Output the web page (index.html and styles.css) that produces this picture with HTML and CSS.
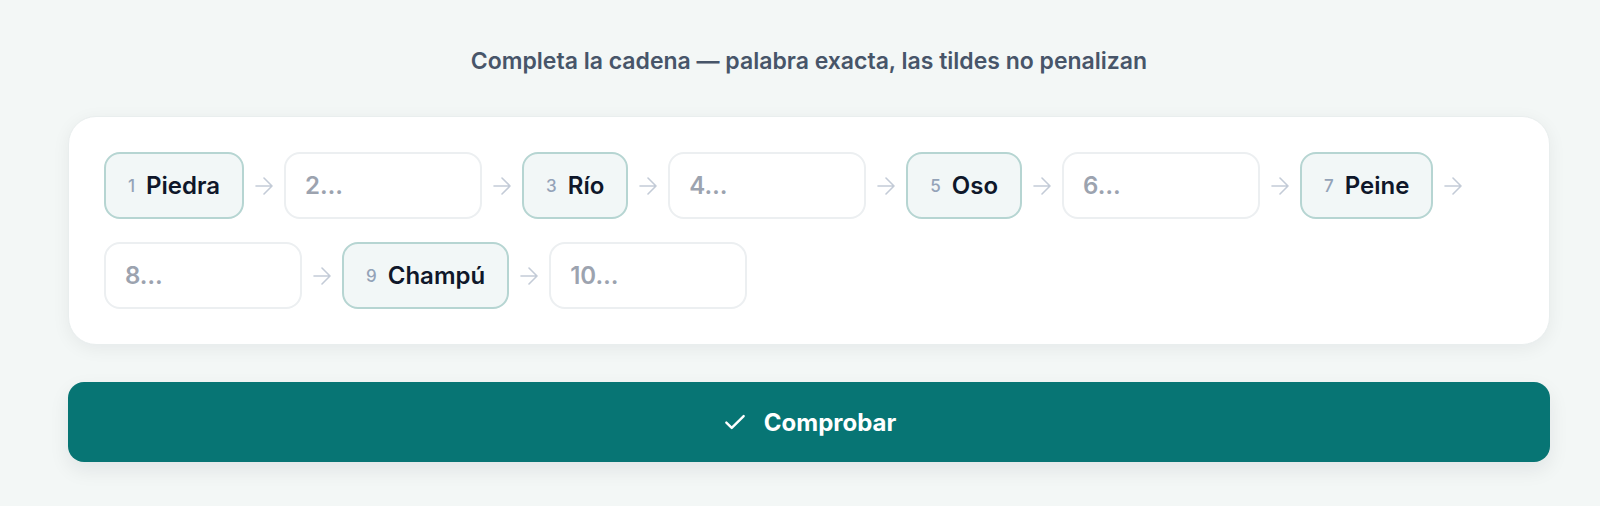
FILE: index.html
```html
<!DOCTYPE html>
<html lang="es">
<head>
  <meta charset="UTF-8" />
  <meta name="viewport" content="width=device-width, initial-scale=1.0"/>
  <title>Cadena de palabras</title>
  <link rel="stylesheet" href="styles.css">
</head>
<body>

  <div class="page">
    <p class="hint">Completa la cadena — palabra exacta, las tildes no penalizan</p>

    <div class="card">
      <div class="chain">
        <div class="link"><div class="chip"><span class="num">1</span><span class="word">Piedra</span></div><svg class="arrow" viewBox="0 0 18 18"><path d="M1 9h16M9 1l8 8-8 8"/></svg></div>
        <div class="link"><input class="slot" type="text" placeholder="2…"><svg class="arrow" viewBox="0 0 18 18"><path d="M1 9h16M9 1l8 8-8 8"/></svg></div>
        <div class="link"><div class="chip"><span class="num">3</span><span class="word">Río</span></div><svg class="arrow" viewBox="0 0 18 18"><path d="M1 9h16M9 1l8 8-8 8"/></svg></div>
        <div class="link"><input class="slot" type="text" placeholder="4…"><svg class="arrow" viewBox="0 0 18 18"><path d="M1 9h16M9 1l8 8-8 8"/></svg></div>
        <div class="link"><div class="chip"><span class="num">5</span><span class="word">Oso</span></div><svg class="arrow" viewBox="0 0 18 18"><path d="M1 9h16M9 1l8 8-8 8"/></svg></div>
        <div class="link"><input class="slot" type="text" placeholder="6…"><svg class="arrow" viewBox="0 0 18 18"><path d="M1 9h16M9 1l8 8-8 8"/></svg></div>
        <div class="link"><div class="chip"><span class="num">7</span><span class="word">Peine</span></div><svg class="arrow" viewBox="0 0 18 18"><path d="M1 9h16M9 1l8 8-8 8"/></svg></div>
        <div class="link"><input class="slot" type="text" placeholder="8…"><svg class="arrow" viewBox="0 0 18 18"><path d="M1 9h16M9 1l8 8-8 8"/></svg></div>
        <div class="link"><div class="chip"><span class="num">9</span><span class="word">Champú</span></div><svg class="arrow" viewBox="0 0 18 18"><path d="M1 9h16M9 1l8 8-8 8"/></svg></div>
        <div class="link"><input class="slot" type="text" placeholder="10…"></div>
      </div>
    </div>

    <button class="check">
      <svg viewBox="0 0 24 24"><path d="M4 12.5l5 5L20 6.5"/></svg>
      Comprobar
    </button>
  </div>

</body>
</html>
```

FILE: styles.css
```css
body {
  margin: 0;
  font-family: Inter, "Noto Sans", sans-serif;
  background: #f3f7f6;
  color: #0f172a;
}
.page {
  padding: 45px 50px 40px 68px;
}
.hint {
  margin: 0 0 39px;
  text-align: center;
  font-size: 23px;
  line-height: 32px;
  font-weight: 600;
  color: #475569;
}
.card {
  background: #fff;
  border: 1px solid #e9eeee;
  border-radius: 28px;
  padding: 35px;
  box-shadow: 0 4px 18px rgba(15, 23, 42, 0.06);
}
.chain {
  display: flex;
  flex-wrap: wrap;
  column-gap: 11px;
  row-gap: 23px;
}
.link {
  display: flex;
  align-items: center;
  gap: 11px;
}
.chip {
  box-sizing: border-box;
  height: 67px;
  display: flex;
  align-items: center;
  gap: 11px;
  padding: 0 22px;
  background: #f2f7f7;
  border: 2px solid #b6d5d2;
  border-radius: 16px;
}
.num {
  font-size: 17px;
  font-weight: 500;
  color: #94a3b8;
}
.word {
  font-size: 24px;
  font-weight: 600;
  color: #0f172a;
}
.slot {
  box-sizing: border-box;
  width: 198px;
  height: 67px;
  padding: 0 19px;
  border: 2px solid #eceff1;
  border-radius: 16px;
  background: #fff;
  font-family: inherit;
  font-size: 24px;
  font-weight: 600;
  color: #0f172a;
  outline: none;
}
.slot::placeholder {
  color: #9ca3af;
}
.arrow {
  width: 18px;
  height: 18px;
  fill: none;
  stroke: #c3cbd7;
  stroke-width: 1.6;
  stroke-linecap: round;
  stroke-linejoin: round;
}
.check {
  display: flex;
  align-items: center;
  justify-content: center;
  gap: 16px;
  width: 100%;
  height: 80px;
  margin-top: 37px;
  background: #077574;
  color: #fff;
  border: none;
  border-radius: 16px;
  font-family: inherit;
  font-size: 24px;
  font-weight: 700;
  cursor: pointer;
  box-shadow: 0 8px 20px rgba(15, 23, 42, 0.08);
}
.check svg {
  width: 26px;
  height: 26px;
  fill: none;
  stroke: #fff;
  stroke-width: 2.2;
  stroke-linecap: round;
  stroke-linejoin: round;
}
```
